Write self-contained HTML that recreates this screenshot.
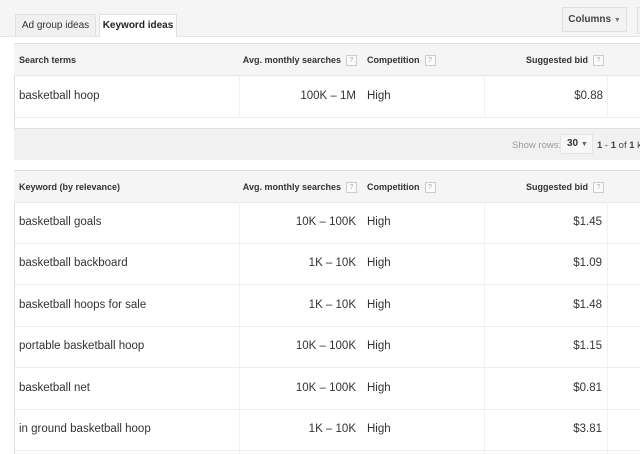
<!DOCTYPE html><html><head><style>
body{margin:0;width:640px;height:454px;overflow:hidden;background:#fff;font-family:"Liberation Sans",Arial,sans-serif;color:#222;position:relative}
.a{position:absolute}
.top{left:0;top:0;width:640px;height:36px;background:#f5f5f5;border-bottom:1px solid #e5e5e5}
.tab{top:14px;height:22px;font-size:10px;line-height:21px;text-align:center;border:1px solid #e0e0e0;border-bottom:none;box-sizing:border-box}
.hdr{left:14px;width:626px;height:33px;background:#f5f5f5;border-top:1px solid #ddd;border-bottom:1px solid #e8e8e8;box-sizing:border-box}
.h{font-size:9px;font-weight:bold;color:#333;top:0;line-height:32px;white-space:nowrap}
.q{display:inline-block;width:9px;height:9px;border:1px solid #ccc;font-size:7px;line-height:9px;text-align:center;color:#aaa;font-weight:normal;vertical-align:middle;margin-left:5px;background:#fafafa}
.row{left:14px;width:626px;height:42px;border-bottom:1px solid #ececec;box-sizing:border-box;font-size:11.5px;color:#333}
.row span{position:absolute;line-height:41px;white-space:nowrap}
.vl{width:1px;background:#f0f0f0}
.lb{left:14px;width:1px;background:#ddd}
</style></head><body>
<div class="a top"></div>
<div class="a tab" style="left:15px;width:81px;background:#f0f0f0;color:#333">Ad group ideas</div>
<div class="a tab" style="left:99px;width:78px;height:23px;background:#fff;color:#222;font-weight:bold">Keyword ideas</div>
<div class="a" style="left:562px;top:7px;width:65px;height:25px;border:1px solid #e0e0e0;box-sizing:border-box;background:#f2f2f2;font-size:10px;font-weight:bold;color:#444;line-height:23px;text-align:center">Columns <span style="font-size:7px;color:#777">▼</span></div>
<div class="a" style="left:637px;top:7px;width:10px;height:25px;border:1px solid #e0e0e0;background:#f2f2f2"></div>

<div class="a lb" style="top:43px;height:86px"></div>
<div class="a hdr" style="top:43px">
<span class="a h" style="left:5px">Search terms</span>
<span class="a h" style="right:283px">Avg. monthly searches<span class="q">?</span></span>
<span class="a h" style="left:353px">Competition<span class="q">?</span></span>
<span class="a h" style="right:36px">Suggested bid<span class="q">?</span></span>
</div>
<div class="a row" style="top:76px;height:42px">
<span style="left:5px">basketball hoop</span>
<span style="right:284px">100K – 1M</span>
<span style="left:353px">High</span>
<span style="right:37px">$0.88</span>
</div>
<div class="a" style="left:14px;top:128px;width:626px;height:32px;background:#f1f1f1;border-top:1px solid #e0e0e0;box-sizing:border-box"></div>
<span class="a" style="left:512px;top:140px;font-size:9.5px;color:#999">Show rows:</span>
<div class="a" style="left:560px;top:134px;width:33px;height:20px;background:#f8f8f8;border:1px solid #e4e4e4;box-sizing:border-box;font-size:10px;font-weight:bold;line-height:18px;padding-left:6px;color:#333">30 <span style="font-size:7px;color:#666">▼</span></div>
<span class="a" style="left:597px;top:140px;font-size:9.5px;color:#444;white-space:nowrap"><b>1</b> - <b>1</b> of <b>1</b> ke</span>

<div class="a lb" style="top:170px;height:284px"></div>
<div class="a hdr" style="top:170px">
<span class="a h" style="left:5px">Keyword (by relevance)</span>
<span class="a h" style="right:283px">Avg. monthly searches<span class="q">?</span></span>
<span class="a h" style="left:353px">Competition<span class="q">?</span></span>
<span class="a h" style="right:36px">Suggested bid<span class="q">?</span></span>
</div>
<div class="a row" style="top:202px"><span style="left:5px">basketball goals</span><span style="right:284px">10K – 100K</span><span style="left:353px">High</span><span style="right:38px">$1.45</span></div>
<div class="a row" style="top:243px"><span style="left:5px">basketball backboard</span><span style="right:284px">1K – 10K</span><span style="left:353px">High</span><span style="right:38px">$1.09</span></div>
<div class="a row" style="top:285px"><span style="left:5px">basketball hoops for sale</span><span style="right:284px">1K – 10K</span><span style="left:353px">High</span><span style="right:38px">$1.48</span></div>
<div class="a row" style="top:326px"><span style="left:5px">portable basketball hoop</span><span style="right:284px">10K – 100K</span><span style="left:353px">High</span><span style="right:38px">$1.15</span></div>
<div class="a row" style="top:368px"><span style="left:5px">basketball net</span><span style="right:284px">10K – 100K</span><span style="left:353px">High</span><span style="right:38px">$0.81</span></div>
<div class="a row" style="top:409px"><span style="left:5px">in ground basketball hoop</span><span style="right:284px">1K – 10K</span><span style="left:353px">High</span><span style="right:38px">$3.81</span></div>

<div class="a vl" style="left:239px;top:76px;height:42px"></div>
<div class="a vl" style="left:484px;top:76px;height:42px"></div>
<div class="a vl" style="left:607px;top:76px;height:42px"></div>
<div class="a vl" style="left:239px;top:202px;height:252px"></div>
<div class="a vl" style="left:484px;top:202px;height:252px"></div>
<div class="a vl" style="left:607px;top:202px;height:252px"></div>
</body></html>
